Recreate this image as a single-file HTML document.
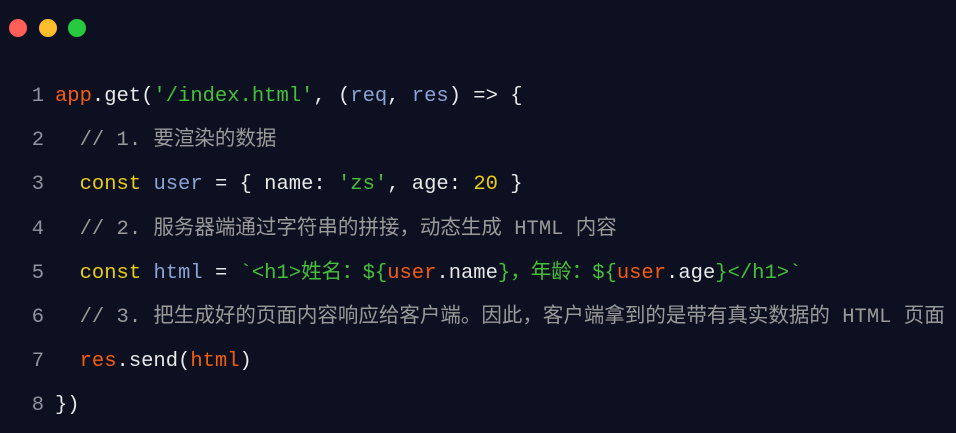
<!DOCTYPE html>
<html><head><meta charset="utf-8"><style>
body{margin:0;width:956px;height:433px;background:#0d1020;overflow:hidden;position:relative}
.dot{position:absolute;top:19px;width:18px;height:18px;border-radius:50%}
.code{position:absolute;left:0;top:75px;font-family:"Liberation Mono","Noto Sans CJK SC",monospace;font-size:20.5px;line-height:44.2px;color:#e8e8e8;white-space:pre}
.ln{display:inline-block;width:44px;text-align:right;padding-right:11px;color:#8e949e}
.o{color:#f45d0e}.g{color:#45c03a}.y{color:#e8cc10}.b{color:#8aa2d6}.c{color:#9a9a9a}
</style></head><body>
<div class="dot" style="left:9px;background:#ff5f56"></div>
<div class="dot" style="left:39px;background:#ffbd2e"></div>
<div class="dot" style="left:68px;background:#27c93f"></div>
<div class="code"><div><span class="ln">1</span><span class="o">app</span>.get(<span class="g">'/index.html'</span>, (<span class="b">req</span>, <span class="b">res</span>) =&gt; {</div><div><span class="ln">2</span>  <span class="c">// 1. 要渲染的数据</span></div><div><span class="ln">3</span>  <span class="y">const</span> <span class="b">user</span> = { name: <span class="g">'zs'</span>, age: <span class="y">20</span> }</div><div><span class="ln">4</span>  <span class="c">// 2. 服务器端通过字符串的拼接，动态生成 HTML 内容</span></div><div><span class="ln">5</span>  <span class="y">const</span> <span class="b">html</span> = <span class="g">`&lt;h1&gt;姓名：${</span><span class="o">user</span>.name<span class="g">}，年龄：${</span><span class="o">user</span>.age<span class="g">}&lt;/h1&gt;`</span></div><div><span class="ln">6</span>  <span class="c">// 3. 把生成好的页面内容响应给客户端。因此，客户端拿到的是带有真实数据的 HTML 页面</span></div><div><span class="ln">7</span>  <span class="o">res</span>.send(<span class="o">html</span>)</div><div><span class="ln">8</span>})</div></div>
</body></html>
